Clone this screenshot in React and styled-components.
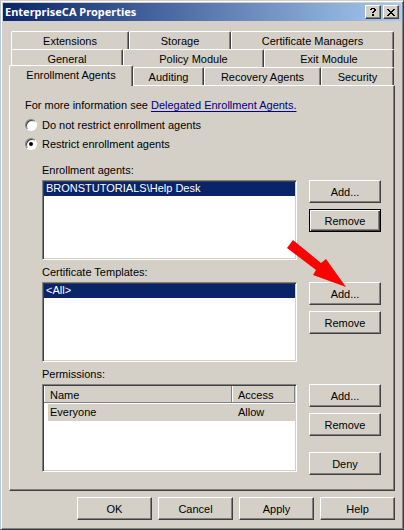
import React, { useState } from "react";
import styled, { createGlobalStyle, css } from "styled-components";

const face = "#d4d0c8";
const shade = "#808080";
const dark = "#404040";
const navy = "#0a246a";

const Global = createGlobalStyle`
  * { box-sizing: border-box; }
  body { margin: 0; background: ${face}; }
  body, button, select {
    font-family: "Liberation Sans", Arial, sans-serif;
    font-size: 11px;
    line-height: 14px;
    color: #000;
  }
`;

const raised = css`
  border: 1px solid;
  border-color: #fff ${dark} ${dark} #fff;
  box-shadow: inset -1px -1px 0 ${shade};
`;

const Dialog = styled.main`
  min-height: 100vh;
  display: flex;
  flex-direction: column;
  background: ${face};
  border: 1px solid;
  border-color: ${face} #34424e #34424e #b4c6dc;
  box-shadow: inset 1px 1px 0 #fff, inset -1px -1px 0 ${shade};
  padding: 2px;
`;

const TitleBar = styled.header`
  display: flex;
  align-items: center;
  gap: 2px;
  height: 18px;
  padding: 0 2px;
  background: linear-gradient(90deg, ${navy}, #a6caf0);
`;

const Title = styled.h1`
  flex: 1;
  margin: 0;
  font: bold 11px/18px "Noto Sans", "Open Sans", sans-serif;
  color: #fff;
  white-space: nowrap;
`;

const CaptionButton = styled.button`
  ${raised}
  display: grid;
  place-items: center;
  width: 16px;
  height: 14px;
  padding: 0;
  background: ${face};
`;

const Body = styled.div`
  padding: 10px 6px 7px;
`;

const Tabs = styled.div`
  padding: 0 1px 0 2px;
`;

const TabRow = styled.div`
  display: grid;
  grid-template-columns: ${(p) => p.$columns};
  height: 18px;
`;

const Tab = styled.button`
  min-width: 0;
  height: 18px;
  padding: 1px 0 0;
  background: ${face};
  border: 1px solid;
  border-color: #fff ${dark} transparent #fff;
  border-bottom: 0;
  border-radius: 2px 2px 0 0;
  box-shadow: inset -1px 0 0 ${shade};
  white-space: nowrap;
  ${(p) =>
    p.$active &&
    css`
      z-index: 1;
      height: 21px;
      margin: -2px 0 0 -2px;
      padding-bottom: 3px;
    `}
`;

const Panel = styled.section`
  border: 1px solid;
  border-color: #fff ${dark} ${dark} #fff;
  box-shadow: inset -1px -1px 0 ${shade};
  padding: 12px 13px 15px 15px;
`;

const Info = styled.p`
  margin: 0 0 2px;
  line-height: 15px;
`;

const Link = styled.a`
  color: #000080;
  text-underline-offset: 2px;
`;

const RadioLabel = styled.label`
  display: flex;
  align-items: center;
  gap: 5px;
  height: 19px;
`;

const Radio = styled.input`
  appearance: none;
  display: grid;
  place-items: center;
  width: 12px;
  height: 12px;
  margin: 0;
  border: 1px solid;
  border-color: ${shade} #fff #fff ${shade};
  border-radius: 50%;
  background: #fff;
  box-shadow: inset 1px 1px 0 ${dark};
  &:checked::before {
    content: "";
    width: 4px;
    height: 4px;
    border-radius: 50%;
    background: #000;
  }
`;

const Groups = styled.div`
  display: grid;
  gap: 4px;
  margin: 9px 0 0 17px;
`;

const Group = styled.div`
  display: grid;
  grid-template-columns: 1fr 72px;
  column-gap: 12px;
  align-items: start;
`;

const GroupLabel = styled.label`
  grid-column: 1 / -1;
  height: 18px;
  line-height: 16px;
`;

const sunken = css`
  width: 100%;
  border: 1px solid;
  border-color: ${shade} #fff #fff ${shade};
  background: #fff;
  box-shadow: inset 1px 1px 0 ${dark}, inset -1px -1px 0 ${face};
`;

const ListBox = styled.select`
  ${sunken}
  height: 80px;
  padding: 1px;
  border-radius: 0;
  outline: 0;
  overflow: hidden;
  option {
    min-height: 14px;
    padding: 0 2px;
    line-height: 14px;
  }
  option:checked {
    background: linear-gradient(${navy}, ${navy});
    -webkit-text-fill-color: #fff;
  }
`;

const TableBox = styled.div`
  ${sunken}
  height: 88px;
  padding: 1px;
`;

const Table = styled.table`
  width: 100%;
  table-layout: fixed;
  border-collapse: separate;
  border-spacing: 0;
`;

const Th = styled.th`
  width: ${(p) => p.$width || "auto"};
  height: 17px;
  padding: 1px 0 0 6px;
  text-align: left;
  font-weight: normal;
  background: ${face};
  border-right: 1px solid ${shade};
  border-bottom: 1px solid ${shade};
  box-shadow: inset 1px 0 0 #fff;
`;

const Td = styled.td`
  height: 18px;
  padding: 0 0 0 6px;
  background: linear-gradient(${face}, ${face}) ${(p) => (p.$first ? "4px" : "0")} 1px no-repeat;
`;

const Actions = styled.div`
  display: grid;
  gap: 6px;
`;

const Button = styled.button`
  ${raised}
  height: 23px;
  padding: 0;
  background: ${face};
  ${(p) =>
    p.$default &&
    css`
      border-color: #000;
      box-shadow: inset 1px 1px 0 #fff, inset -1px -1px 0 ${dark}, inset -2px -2px 0 ${shade};
    `}
  ${(p) =>
    p.$apart &&
    css`
      margin-top: 10px;
    `}
`;

const Footer = styled.footer`
  display: grid;
  grid-template-columns: repeat(4, 75px);
  justify-content: end;
  gap: 6px;
  padding-top: 6px;
`;

const Arrow = styled.svg`
  position: absolute;
  left: 286px;
  top: 239px;
  pointer-events: none;
`;

const tabRows = [
  { columns: "118fr 102fr 163fr", tabs: ["Extensions", "Storage", "Certificate Managers"] },
  { columns: "112fr 141fr 130fr", tabs: ["General", "Policy Module", "Exit Module"] },
  { columns: "122fr 71fr 117fr 73fr", tabs: ["Enrollment Agents", "Auditing", "Recovery Agents", "Security"] },
];

export default function App() {
  const [restrict, setRestrict] = useState(true);
  return (
    <Dialog>
      <Global />
      <TitleBar>
        <Title>EnterpriseCA Properties</Title>
        <CaptionButton aria-label="Help">
          <svg width="6" height="8" viewBox="0 0 6 8" shapeRendering="crispEdges">
            <path d="M1 0h4v1H1zM0 1h2v1H0zM4 1h2v2H4zM3 3h2v1H3zM2 4h2v1H2zM2 6h2v2H2z" />
          </svg>
        </CaptionButton>
        <CaptionButton aria-label="Close">
          <svg width="8" height="7" viewBox="0 0 8 7" shapeRendering="crispEdges">
            <path d="M0 0h2v1H0zM6 0h2v1H6zM1 1h2v1H1zM5 1h2v1H5zM2 2h4v1H2zM3 3h2v1H3zM2 4h4v1H2zM1 5h2v1H1zM5 5h2v1H5zM0 6h2v1H0zM6 6h2v1H6z" />
          </svg>
        </CaptionButton>
      </TitleBar>
      <Body>
        <Tabs role="tablist">
          {tabRows.map((row) => (
            <TabRow key={row.columns} $columns={row.columns}>
              {row.tabs.map((name) => (
                <Tab key={name} role="tab" aria-selected={name === "Enrollment Agents"} $active={name === "Enrollment Agents"}>
                  {name}
                </Tab>
              ))}
            </TabRow>
          ))}
        </Tabs>
        <Panel>
          <Info>
            For more information see <Link href="#agents">Delegated Enrollment Agents.</Link>
          </Info>
          <RadioLabel>
            <Radio type="radio" name="restrict" checked={!restrict} onChange={() => setRestrict(false)} />
            Do not restrict enrollment agents
          </RadioLabel>
          <RadioLabel>
            <Radio type="radio" name="restrict" checked={restrict} onChange={() => setRestrict(true)} />
            Restrict enrollment agents
          </RadioLabel>
          <Groups>
            <Group>
              <GroupLabel htmlFor="agents">Enrollment agents:</GroupLabel>
              <ListBox id="agents" size={5} defaultValue="desk">
                <option value="desk">BRONSTUTORIALS\Help Desk</option>
              </ListBox>
              <Actions>
                <Button>Add...</Button>
                <Button $default>Remove</Button>
              </Actions>
            </Group>
            <Group>
              <GroupLabel htmlFor="templates">Certificate Templates:</GroupLabel>
              <ListBox id="templates" size={5} defaultValue="all">
                <option value="all">&lt;All&gt;</option>
              </ListBox>
              <Actions>
                <Button>Add...</Button>
                <Button>Remove</Button>
              </Actions>
            </Group>
            <Group>
              <GroupLabel as="div" id="permissions">Permissions:</GroupLabel>
              <TableBox>
                <Table aria-labelledby="permissions">
                  <thead>
                    <tr>
                      <Th>Name</Th>
                      <Th $width="63px">Access</Th>
                    </tr>
                  </thead>
                  <tbody>
                    <tr>
                      <Td $first>Everyone</Td>
                      <Td>Allow</Td>
                    </tr>
                  </tbody>
                </Table>
              </TableBox>
              <Actions>
                <Button>Add...</Button>
                <Button>Remove</Button>
                <Button $apart>Deny</Button>
              </Actions>
            </Group>
          </Groups>
        </Panel>
        <Footer>
          <Button>OK</Button>
          <Button>Cancel</Button>
          <Button>Apply</Button>
          <Button>Help</Button>
        </Footer>
      </Body>
      <Arrow width="62" height="50" viewBox="0 0 62 50">
        <path d="M7 1 35 24 40 20 60 48 27 36 30 31 1 9Z" fill="#f00" />
      </Arrow>
    </Dialog>
  );
}
